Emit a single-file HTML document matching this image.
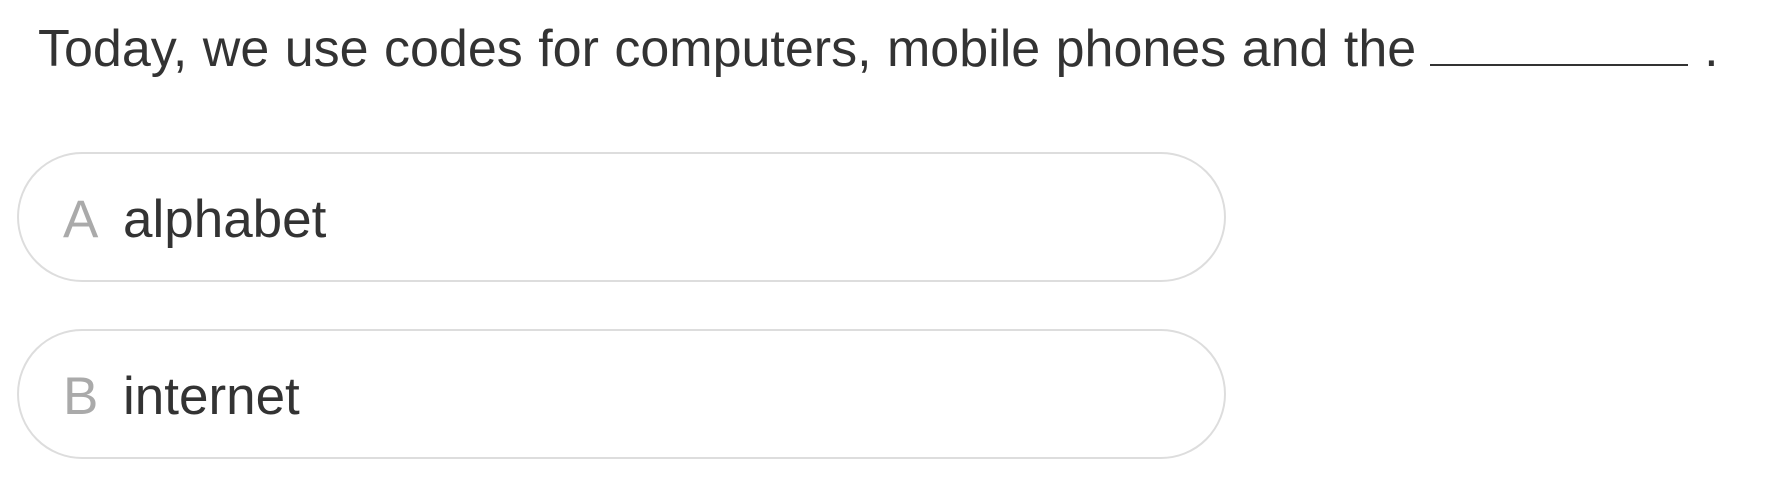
<!DOCTYPE html>
<html><head><style>
body{margin:0;width:1765px;height:487px;background:#fff;font-family:"Liberation Sans","DejaVu Sans",sans-serif;color:#333;position:relative;overflow:hidden}
.q{position:absolute;left:38px;top:18px;font-size:52px;white-space:nowrap;line-height:62px;word-spacing:1px}
.blank{display:inline-block;width:258px;border-bottom:2px solid #333;height:46px;margin:0 16px 0 14px;vertical-align:baseline}
.opt{position:absolute;left:17px;width:1209px;height:130px;border:2px solid #ddd;border-radius:66px;box-sizing:border-box}
.opt span{position:absolute;top:35px;font-size:53px;line-height:62px}
.l{left:44px;color:#aaa}
.t{left:104px;color:#333}
</style></head><body>
<div class="q">Today, we use codes for computers, mobile phones and the<span class="blank"></span>.</div>
<div class="opt" style="top:152px"><span class="l">A</span><span class="t">alphabet</span></div>
<div class="opt" style="top:329px"><span class="l">B</span><span class="t">internet</span></div>
</body></html>
